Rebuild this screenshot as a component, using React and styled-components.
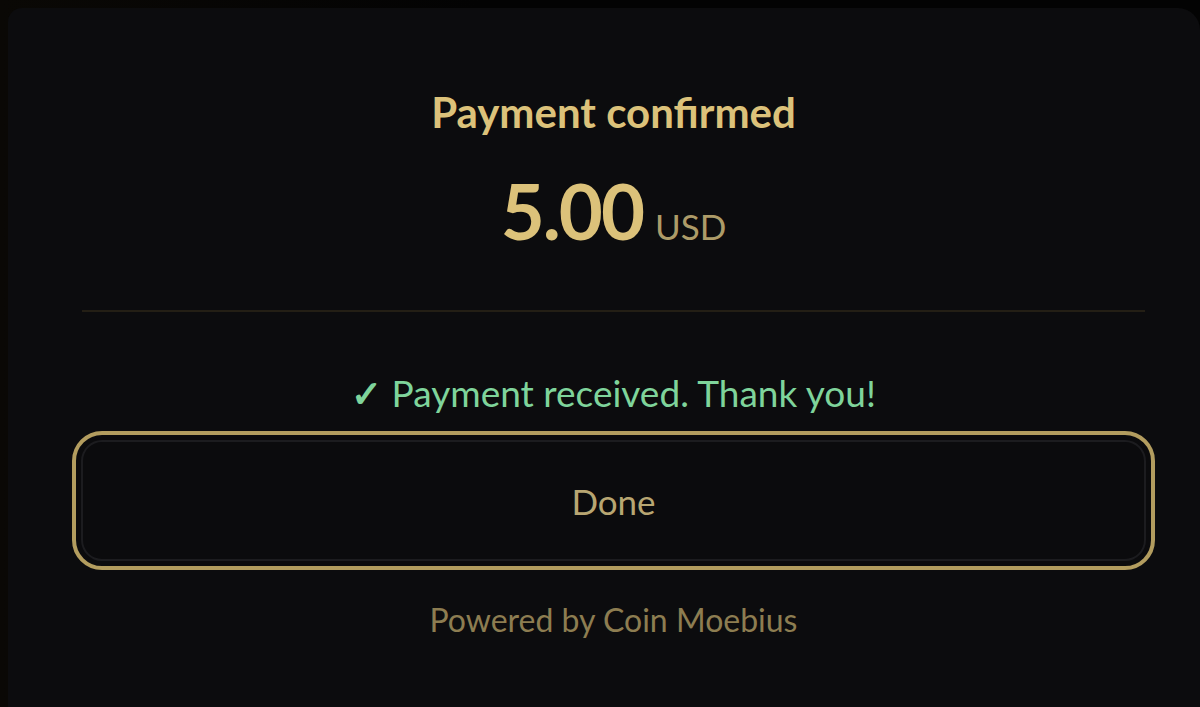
import React from "react";
import styled, { createGlobalStyle } from "styled-components";

const GlobalStyle = createGlobalStyle`
  html, body {
    margin: 0;
    padding: 0;
    background: #040404;
    overflow: hidden;
  }
  body {
    font-family: Lato, "Noto Sans", sans-serif;
  }
`;

const Screen = styled.div`
  width: 1200px;
  height: 707px;
  padding: 8px 0 0 8px;
  box-sizing: border-box;
  background: linear-gradient(90deg, #0a0805 0%, #030303 40%, #030303 100%);
  overflow: hidden;
`;

const Card = styled.div`
  width: 1192px;
  height: 720px;
  box-sizing: border-box;
  background: #0c0c0e;
  border-radius: 14px 22px 0 0;
  padding: 79px 45px 0 64px;
  display: flex;
  flex-direction: column;
  align-items: stretch;
`;

const Title = styled.h1`
  margin: 0;
  text-align: center;
  font-size: 42px;
  line-height: 50px;
  font-weight: 700;
  color: #dcc27a;
`;

const AmountRow = styled.div`
  margin-top: 32px;
  height: 84px;
  display: flex;
  justify-content: center;
  align-items: baseline;
  gap: 12px;
`;

const Amount = styled.span`
  font-size: 76px;
  line-height: 84px;
  font-weight: 700;
  letter-spacing: -2px;
  color: #dcc27a;
`;

const Currency = styled.span`
  font-size: 35px;
  font-weight: 400;
  color: #ad9b68;
`;

const Divider = styled.hr`
  margin: 57px 10px 0;
  border: 0;
  height: 2px;
  background: #241f15;
`;

const Status = styled.p`
  margin: 59px 0 0;
  text-align: center;
  font-size: 37px;
  line-height: 43px;
  color: #7fd49b;
`;

const Check = styled.span`
  font-weight: 700;
`;

const DoneButton = styled.button`
  margin-top: 17px;
  height: 139px;
  border: 4px solid #b39d5f;
  border-radius: 30px;
  background: #0b0b0d;
  box-shadow: inset 0 0 0 5px #0b0b0d, inset 0 0 0 7px #1c1c1f;
  font-family: inherit;
  font-size: 35px;
  color: #b8a672;
  cursor: pointer;
`;

const Footer = styled.p`
  margin: 31px 0 0;
  text-align: center;
  font-size: 32px;
  line-height: 38px;
  color: #8d7d51;
`;

export default function App() {
  return (
    <>
      <GlobalStyle />
      <Screen>
        <Card>
          <Title>Payment confirmed</Title>
          <AmountRow>
            <Amount>5.00</Amount>
            <Currency>USD</Currency>
          </AmountRow>
          <Divider />
          <Status>
            <Check>✓</Check> Payment received. Thank you!
          </Status>
          <DoneButton>Done</DoneButton>
          <Footer>Powered by Coin Moebius</Footer>
        </Card>
      </Screen>
    </>
  );
}
